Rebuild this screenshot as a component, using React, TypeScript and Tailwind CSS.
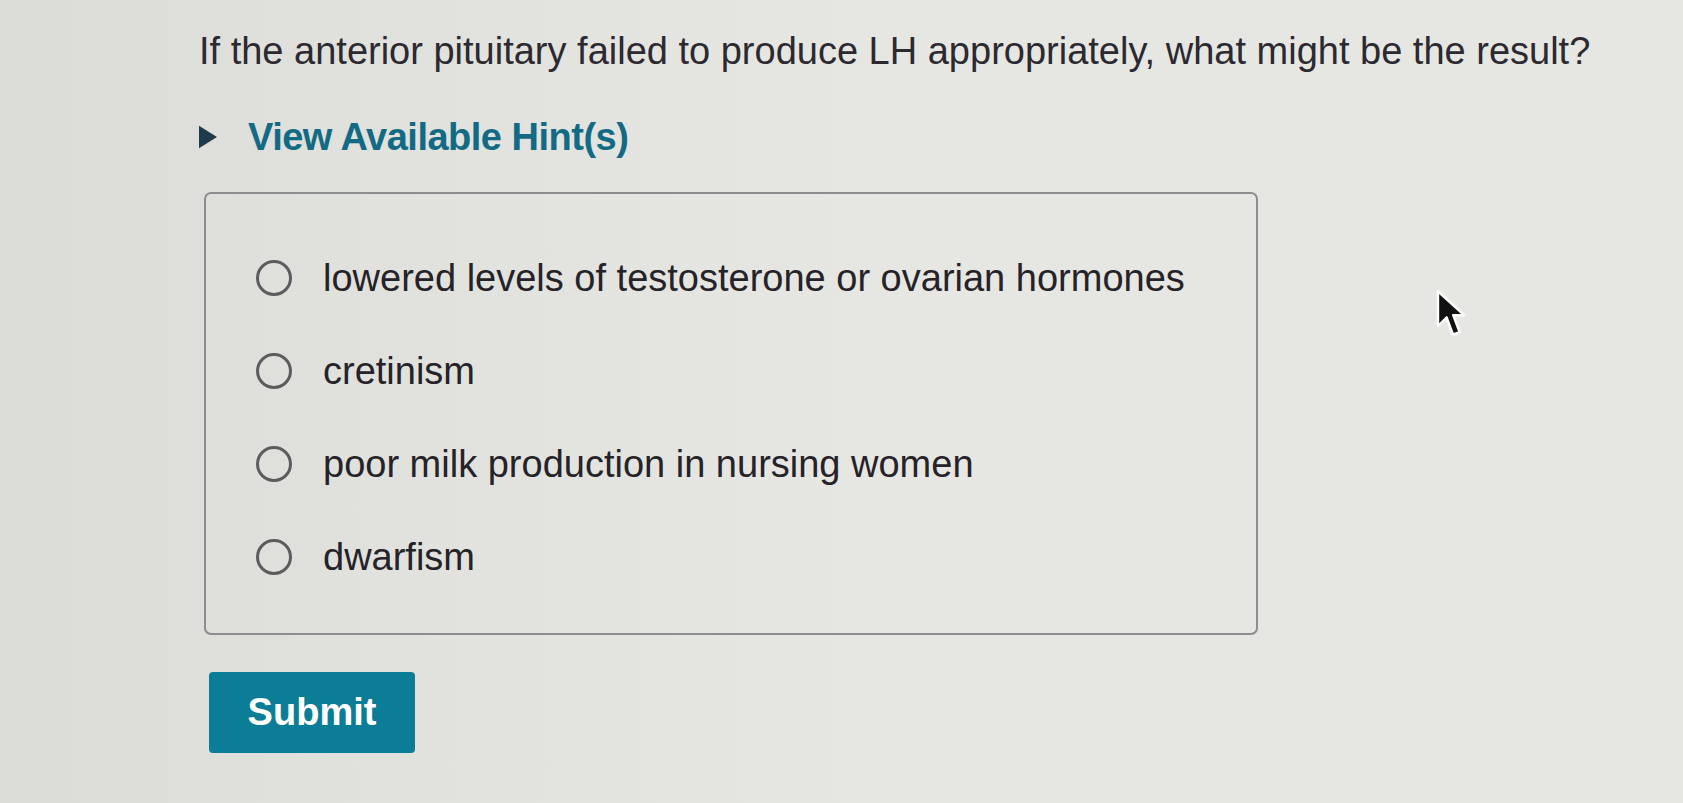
import React, { useState } from 'react'

const options = [
  'lowered levels of testosterone or ovarian hormones',
  'cretinism',
  'poor milk production in nursing women',
  'dwarfism',
]

const Cursor = () => (
  <svg width="32" height="50" viewBox="0 0 15 23" className="drop-shadow-[0_0_1px_rgba(255,255,255,0.9)]">
    <path d="M1 1 L1 17 L5 13 L8 21 L11 20 L8 12 L13 12 Z" fill="#111" stroke="#fff" strokeWidth="1" strokeLinejoin="round" />
  </svg>
)

export default function App() {
  const [selected, setSelected] = useState<number | null>(null)

  return (
    <div
      className="relative w-[1683px] h-[803px] overflow-hidden bg-gradient-to-r from-[#dcdcd8] via-[#e6e6e2] to-[#e6e6e2] text-[#2a2a2e]"
      style={{ fontFamily: '"Liberation Sans", Arial, sans-serif' }}
    >
      <div className="flex flex-col pl-[199px] pt-[29px]">
        <h1 className="text-[38px] leading-[44px] text-[#2c2a30]">
          If the anterior pituitary failed to produce LH appropriately, what might be the result?
        </h1>

        {/* hints toggle */}
        <div className="mt-[42px] flex items-center gap-[31px]">
          <svg width="18" height="24" viewBox="0 0 16 20">
            <polygon points="0,0 16,10 0,20" fill="#1f3b4a" />
          </svg>
          <span className="text-[38px] leading-[44px] font-bold text-[#136a84] tracking-[-0.5px]">View Available Hint(s)</span>
        </div>

        {/* answer box */}
        <div className="ml-[5px] mt-[33px] w-[1054px] h-[443px] rounded-[7px] border-2 border-[#8d8d8f] pl-[50px] pt-[65px] flex flex-col gap-[55px]">
          {options.map((opt, i) => (
            <label key={opt} className="flex items-center gap-[31px] cursor-pointer" onClick={() => setSelected(i)}>
              <span className="w-[36px] h-[36px] rounded-full border-[3px] border-[#5c5c5e] flex items-center justify-center shrink-0">
                {selected === i && <span className="w-[16px] h-[16px] rounded-full bg-[#136a84]" />}
              </span>
              <span className="text-[38px] leading-[38px] text-[#252328]">{opt}</span>
            </label>
          ))}
        </div>

        {/* submit */}
        <div className="mt-[37px] ml-[10px]">
          <button className="w-[206px] h-[81px] rounded-[4px] bg-[#0c7d97] text-white text-[38px] font-bold">
            Submit
          </button>
        </div>
      </div>

      <div className="absolute left-[1436px] top-[289px]">
        <Cursor />
      </div>
    </div>
  )
}
